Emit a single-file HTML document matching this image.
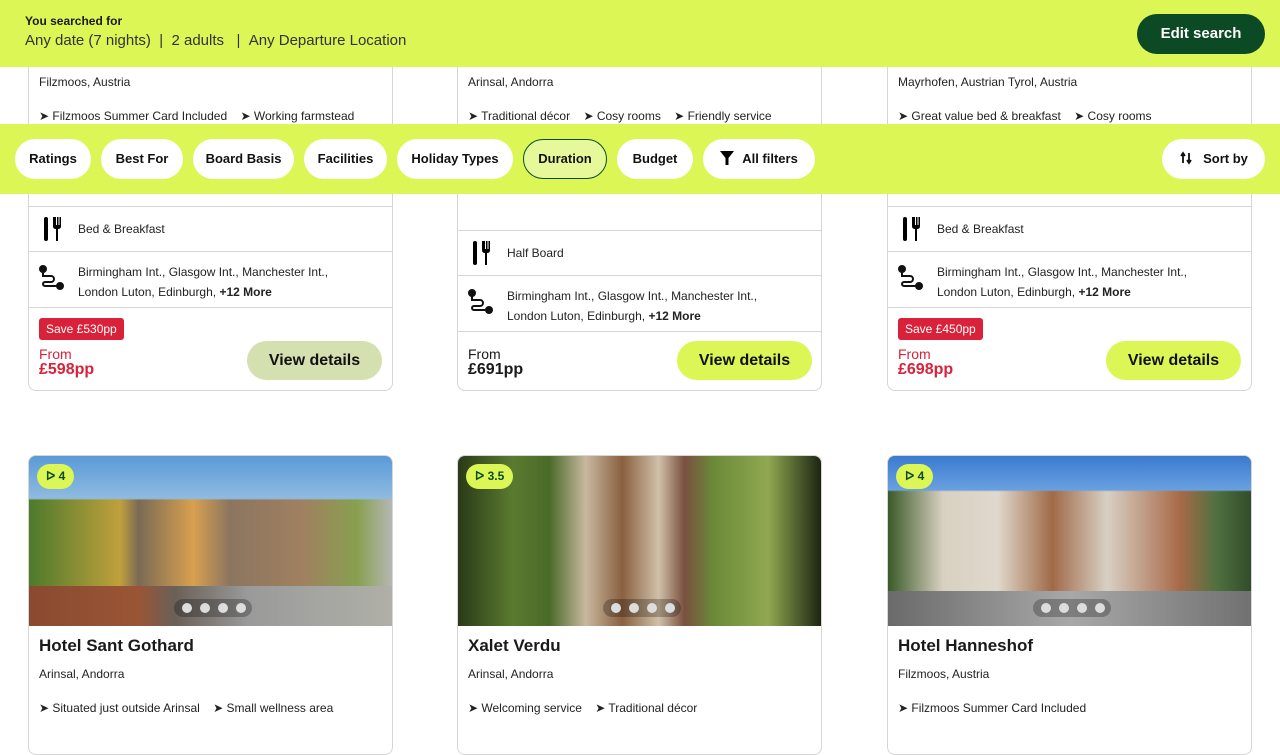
<!DOCTYPE html>
<html><head><meta charset="utf-8"><style>
*{box-sizing:border-box;margin:0;padding:0}
body{width:1280px;height:720px;overflow:hidden;background:#fff;font-family:"Liberation Sans",sans-serif;color:#1a1a1a;position:relative}
.card{position:absolute;width:365px;border:1px solid #d6d6d6;border-radius:8px;background:#fff;overflow:hidden}
.t{position:absolute;font-size:12px;color:#222;white-space:nowrap}
.hr{position:absolute;left:0;right:0;height:1px;background:#d6d6d6}
.btn{position:absolute;width:135px;height:39px;border-radius:20px;background:#dbf655;font-weight:bold;font-size:16px;text-align:center;line-height:39px;color:#111}
.save{position:absolute;background:#d9223a;color:#fff;font-size:12px;padding:0 7px;height:22px;line-height:22px;border-radius:3px}
.from{position:absolute;font-size:14px;line-height:16px}
.from b{font-size:16px;display:block}
.red{color:#d9223a}
.pill{position:absolute;top:139px;height:40px;border-radius:20px;background:#fff;font-weight:bold;font-size:13px;line-height:40px;text-align:center;color:#111}
.img{position:absolute;left:0;top:0;width:365px;height:170px}
.badge{position:absolute;left:8px;top:8px;height:25px;border-radius:13px;background:#dbf655;font-size:12px;font-weight:bold;color:#0b4a24;padding:0 9px;line-height:25px}
.dots{position:absolute;top:143px;height:18px;border-radius:9px;background:rgba(0,0,0,.25);width:78px}
.dots i{display:inline-block;width:10px;height:10px;border-radius:5px;background:#ddd;margin:4px 0 0 8px}
h3{position:absolute;left:10px;top:180px;font-size:17px;font-weight:bold}
</style></head><body>

<!-- top cards -->
<div class="card" style="left:28px;top:40px;height:351px">
<div class="t" style="left:10px;top:34px">Filzmoos, Austria</div>
<div class="t" style="left:10px;top:68px">➤ Filzmoos Summer Card Included &nbsp;&nbsp; ➤ Working farmstead</div>
<div class="hr" style="top:165px"></div>
<svg style="position:absolute;left:12px;top:176px" width="22" height="24" viewBox="0 0 22 24"><rect x="3" y="0" width="4" height="24" rx="2"/><path d="M12 0v9q0 3 3 3v12h2V12q3 0 3-3V0h-1.5v8h-1V0h-1.5v8h-1V0z"/></svg>
<div class="t" style="left:49px;top:181px">Bed &amp; Breakfast</div>
<div class="hr" style="top:210px"></div>
<svg style="position:absolute;left:10px;top:224px" width="26" height="26" viewBox="0 0 26 26" fill="none" stroke="#111" stroke-width="2"><circle cx="4" cy="4" r="3" fill="#111"/><circle cx="21" cy="21" r="3" fill="#111"/><path d="M4 7v4h8a3 3 0 0 1 0 6H6a2 2 0 0 0 0 4h12"/></svg>
<div class="t" style="left:49px;top:221px;line-height:20px">Birmingham Int., Glasgow Int., Manchester Int.,<br>London Luton, Edinburgh, <b>+12 More</b></div>
<div class="hr" style="top:266px"></div>
<div class="save" style="left:10px;top:277px">Save £530pp</div>
<div class="from red" style="left:10px;top:305px">From<b>£598pp</b></div>
<div class="btn" style="left:218px;top:300px;background:#d5e0b0">View details</div>
</div>

<div class="card" style="left:457px;top:40px;height:351px">
<div class="t" style="left:10px;top:34px">Arinsal, Andorra</div>
<div class="t" style="left:10px;top:68px">➤ Traditional décor &nbsp;&nbsp; ➤ Cosy rooms &nbsp;&nbsp; ➤ Friendly service</div>
<div class="hr" style="top:189px"></div>
<svg style="position:absolute;left:12px;top:200px" width="22" height="24" viewBox="0 0 22 24"><rect x="3" y="0" width="4" height="24" rx="2"/><path d="M12 0v9q0 3 3 3v12h2V12q3 0 3-3V0h-1.5v8h-1V0h-1.5v8h-1V0z"/></svg>
<div class="t" style="left:49px;top:205px">Half Board</div>
<div class="hr" style="top:234px"></div>
<svg style="position:absolute;left:10px;top:248px" width="26" height="26" viewBox="0 0 26 26" fill="none" stroke="#111" stroke-width="2"><circle cx="4" cy="4" r="3" fill="#111"/><circle cx="21" cy="21" r="3" fill="#111"/><path d="M4 7v4h8a3 3 0 0 1 0 6H6a2 2 0 0 0 0 4h12"/></svg>
<div class="t" style="left:49px;top:245px;line-height:20px">Birmingham Int., Glasgow Int., Manchester Int.,<br>London Luton, Edinburgh, <b>+12 More</b></div>
<div class="hr" style="top:290px"></div>
<div class="from" style="left:10px;top:305px">From<b>£691pp</b></div>
<div class="btn" style="left:219px;top:300px">View details</div>
</div>

<div class="card" style="left:887px;top:40px;height:351px">
<div class="t" style="left:10px;top:34px">Mayrhofen, Austrian Tyrol, Austria</div>
<div class="t" style="left:10px;top:68px">➤ Great value bed &amp; breakfast &nbsp;&nbsp; ➤ Cosy rooms</div>
<div class="hr" style="top:165px"></div>
<svg style="position:absolute;left:12px;top:176px" width="22" height="24" viewBox="0 0 22 24"><rect x="3" y="0" width="4" height="24" rx="2"/><path d="M12 0v9q0 3 3 3v12h2V12q3 0 3-3V0h-1.5v8h-1V0h-1.5v8h-1V0z"/></svg>
<div class="t" style="left:49px;top:181px">Bed &amp; Breakfast</div>
<div class="hr" style="top:210px"></div>
<svg style="position:absolute;left:10px;top:224px" width="26" height="26" viewBox="0 0 26 26" fill="none" stroke="#111" stroke-width="2"><circle cx="4" cy="4" r="3" fill="#111"/><circle cx="21" cy="21" r="3" fill="#111"/><path d="M4 7v4h8a3 3 0 0 1 0 6H6a2 2 0 0 0 0 4h12"/></svg>
<div class="t" style="left:49px;top:221px;line-height:20px">Birmingham Int., Glasgow Int., Manchester Int.,<br>London Luton, Edinburgh, <b>+12 More</b></div>
<div class="hr" style="top:266px"></div>
<div class="save" style="left:10px;top:277px">Save £450pp</div>
<div class="from red" style="left:10px;top:305px">From<b>£698pp</b></div>
<div class="btn" style="left:218px;top:300px">View details</div>
</div>

<!-- bottom cards -->
<div class="card" style="left:28px;top:455px;height:300px">
<div class="img" style="background:linear-gradient(180deg,#5a9ad8 0%,#8fbbe0 25%,transparent 26%),linear-gradient(90deg,#4d7a2c 0%,#c0a03c 25%,#7a6a55 30%,#d8a050 45%,#8c7560 55%,#a08060 75%,#88a050 90%,#b8b8b8 100%)"></div>
<div style="position:absolute;left:0;top:130px;width:365px;height:40px;background:linear-gradient(90deg,#8a4a30 0,#9a5535 30%,#6a6058 40%,#9a9a9a 60%,#b0b0a8 100%)"></div>
<div class="badge">ᐅ 4</div>
<div class="dots" style="left:145px"><i></i><i></i><i></i><i></i></div>
<h3>Hotel Sant Gothard</h3>
<div class="t" style="left:10px;top:211px">Arinsal, Andorra</div>
<div class="t" style="left:10px;top:245px">➤ Situated just outside Arinsal &nbsp;&nbsp; ➤ Small wellness area</div>
</div>

<div class="card" style="left:457px;top:455px;height:300px">
<div class="img" style="background:linear-gradient(90deg,#2a3a18 0%,#5a7a30 15%,#4a6a28 25%,#c8b8a0 35%,#8a6040 45%,#d0c0a8 55%,#7a5040 62%,#6a8a38 70%,#90a850 85%,#182010 100%)"></div>
<div class="badge">ᐅ 3.5</div>
<div class="dots" style="left:145px"><i></i><i></i><i></i><i></i></div>
<h3>Xalet Verdu</h3>
<div class="t" style="left:10px;top:211px">Arinsal, Andorra</div>
<div class="t" style="left:10px;top:245px">➤ Welcoming service &nbsp;&nbsp; ➤ Traditional décor</div>
</div>

<div class="card" style="left:887px;top:455px;height:300px">
<div class="img" style="background:linear-gradient(180deg,#3a7ad0 0%,#6aa0e0 20%,transparent 21%),linear-gradient(90deg,#3a5a28 0%,#d8d0c0 15%,#e0d8cc 30%,#a06a48 45%,#d8d0c4 60%,#a86a48 80%,#507040 90%,#304a28 100%)"></div>
<div style="position:absolute;left:0;top:135px;width:365px;height:35px;background:linear-gradient(90deg,#6a6a6a,#a8a8a8 50%,#707070)"></div>
<div class="badge">ᐅ 4</div>
<div class="dots" style="left:145px"><i></i><i></i><i></i><i></i></div>
<h3>Hotel Hanneshof</h3>
<div class="t" style="left:10px;top:211px">Filzmoos, Austria</div>
<div class="t" style="left:10px;top:245px">➤ Filzmoos Summer Card Included</div>
</div>

<!-- top bar -->
<div style="position:absolute;left:0;top:0;width:1280px;height:67px;background:#dbf655">
<div style="position:absolute;left:25px;top:14px;font-size:12px;font-weight:bold">You searched for</div>
<div style="position:absolute;left:25px;top:32px;font-size:15px;color:#333;white-space:nowrap">Any date (7 nights) &nbsp;| &nbsp;2 adults &nbsp; | &nbsp;Any Departure Location</div>
<div style="position:absolute;left:1137px;top:14px;width:128px;height:40px;border-radius:20px;background:#0b4a24;color:#fff;font-weight:bold;font-size:15px;text-align:center;line-height:40px">Edit search</div>
</div>

<!-- filter bar -->
<div style="position:absolute;left:0;top:124px;width:1280px;height:70px;background:#dbf655"></div>
<div class="pill" style="left:15px;width:76px">Ratings</div>
<div class="pill" style="left:101px;width:82px">Best For</div>
<div class="pill" style="left:193px;width:101px">Board Basis</div>
<div class="pill" style="left:304px;width:83px">Facilities</div>
<div class="pill" style="left:397px;width:116px">Holiday Types</div>
<div class="pill" style="left:523px;width:84px;background:#e6f99a;border:1px solid #0b4a24;line-height:38px">Duration</div>
<div class="pill" style="left:617px;width:76px">Budget</div>
<div class="pill" style="left:703px;width:112px"><svg width="14" height="14" viewBox="0 0 14 14" style="vertical-align:-2px;margin-right:8px"><path d="M0 0h14L8.5 7v7h-3V7z"/></svg>All filters</div>
<div class="pill" style="left:1162px;width:103px"><svg width="14" height="14" viewBox="0 0 14 14" style="vertical-align:-2px;margin-right:10px" stroke="#111" stroke-width="1.8" fill="#111"><path d="M4 12V3M2 5l2-3 2 3M10 2v9M8 9l2 3 2-3"/></svg>Sort by</div>

</body></html>
